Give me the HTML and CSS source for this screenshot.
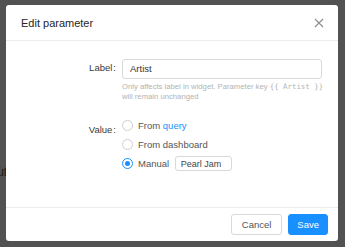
FILE: index.html
```html
<!DOCTYPE html>
<html lang="en">
<head>
  <meta charset="UTF-8">
  <title>Edit parameter</title>
  <link rel="stylesheet" href="styles.css">
</head>
<body>
  <div class="page">
    <p class="page-line">Value input</p>
    <p class="page-line">Artists</p>
  </div>

  <div class="overlay">
    <div class="modal">
      <div class="modal-header">
        <span class="modal-title">Edit parameter</span>
        <svg class="close" width="10" height="10" viewBox="0 0 10 10">
          <path d="M1 1 L9 9 M9 1 L1 9" stroke="#8c8c8c" stroke-width="1.1" fill="none"/>
        </svg>
      </div>

      <div class="modal-body">
        <div class="form-row">
          <label class="form-label">Label</label>
          <div class="form-control">
            <input class="input" type="text" value="Artist">
            <p class="hint">Only affects label in widget. Parameter key <code>{{ Artist }}</code><br>will remain unchanged</p>
          </div>
        </div>

        <div class="form-row value-row">
          <label class="form-label">Value</label>
          <div class="form-control radios">
            <div class="radio"><span class="dot"></span>From <span class="link">query</span></div>
            <div class="radio"><span class="dot"></span>From dashboard</div>
            <div class="radio"><span class="dot checked"></span>Manual <input class="input small" type="text" value="Pearl Jam"></div>
          </div>
        </div>
      </div>

      <div class="modal-footer">
        <button class="btn">Cancel</button>
        <button class="btn primary">Save</button>
      </div>
    </div>
  </div>
</body>
</html>
```

FILE: styles.css
```css
body {
  margin: 0;
  font-family: "Liberation Sans", Arial, sans-serif;
  background: #525252;
  width: 345px;
  height: 247px;
  overflow: hidden;
}

.page {
  padding-top: 165px;
  margin-left: -52px;
  color: #1a1a1a;
  font-size: 12px;
}

.page-line {
  margin: 0 0 8px;
}

.overlay {
  position: absolute;
  top: 0;
  left: 0;
  width: 345px;
  height: 247px;
  padding: 5px 0 0 6px;
  box-sizing: border-box;
}

.modal {
  width: 332px;
  height: 236px;
  background: #fff;
  border-radius: 3px;
  display: flex;
  flex-direction: column;
}

.modal-header {
  height: 35px;
  padding: 0 14px 0 15px;
  border-bottom: 1px solid #ececec;
  display: flex;
  align-items: center;
  justify-content: space-between;
}

.modal-title {
  font-size: 11px;
  color: #262626;
}

.modal-body {
  flex: 1;
  padding: 17px 16px 0 0;
}

.form-row {
  display: grid;
  grid-template-columns: 110px minmax(0, 1fr);
  column-gap: 6px;
}

.form-label {
  text-align: right;
  font-size: 9.5px;
  color: #3a3a3a;
  line-height: 20px;
}

.form-label::after {
  content: ":";
  margin-left: 1px;
}

.input {
  box-sizing: border-box;
  width: 100%;
  height: 20px;
  border: 1px solid #d9d9d9;
  border-radius: 3px;
  padding: 0 7px;
  font-family: inherit;
  font-size: 9.5px;
  color: #333;
  outline: none;
}

.hint {
  margin: 3px 0 0;
  font-size: 7.7px;
  line-height: 10px;
  color: #b3b3b3;
  white-space: nowrap;
}

.hint code {
  font-family: "DejaVu Sans Mono", monospace;
  font-size: 7.4px;
  line-height: 10px;
}

.value-row {
  margin-top: 17px;
}

.value-row .form-label {
  line-height: 14px;
  padding-top: 4px;
}

.radios {
  display: flex;
  flex-direction: column;
  gap: 5px;
}

.radio {
  display: flex;
  align-items: center;
  height: 14px;
  font-size: 9.5px;
  color: #555;
  white-space: pre;
}

.dot {
  box-sizing: border-box;
  width: 11px;
  height: 11px;
  border: 1px solid #cfcfcf;
  border-radius: 50%;
  margin: 0 5px 0 0;
  display: flex;
  align-items: center;
  justify-content: center;
}

.dot.checked {
  border-color: #1890ff;
}

.dot.checked::after {
  content: "";
  width: 5px;
  height: 5px;
  border-radius: 50%;
  background: #1890ff;
}

.link {
  color: #1890ff;
}

.input.small {
  width: 57px;
  height: 15px;
  margin-left: 3px;
  padding: 0 5px;
  font-size: 9px;
  color: #444;
}

.modal-footer {
  border-top: 1px solid #ececec;
  padding: 6px 10px 0;
  height: 27px;
  display: flex;
  justify-content: flex-end;
  gap: 6px;
}

.btn {
  height: 21px;
  border: 1px solid #d9d9d9;
  border-radius: 3px;
  background: #fff;
  font-family: inherit;
  font-size: 9.5px;
  color: #555;
  padding: 0 10px;
}

.btn.primary {
  background: #1890ff;
  border-color: #1890ff;
  color: #fff;
  padding: 0 8px;
}
```
